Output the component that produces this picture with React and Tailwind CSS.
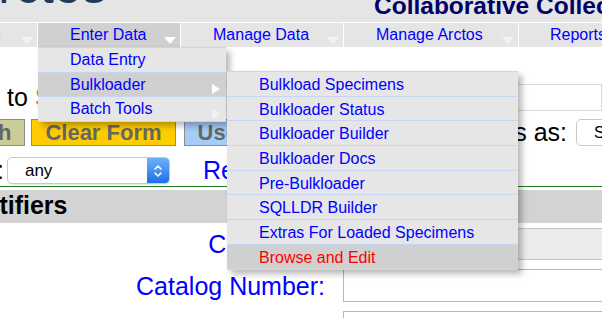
export default function App() {
  const sub = [
    "Bulkload Specimens",
    "Bulkloader Status",
    "Bulkloader Builder",
    "Bulkloader Docs",
    "Pre-Bulkloader",
    "SQLLDR Builder",
    "Extras For Loaded Specimens",
    "Browse and Edit",
  ];
  const DownArrow = ({ c }) => (
    <span className={`ml-auto mr-[4px] self-end mb-[3px] w-0 h-0 border-t-[7px] border-x-[6.5px] border-x-transparent ${c}`} />
  );
  return (
    <div className="relative w-[602px] h-[318px] overflow-hidden bg-white font-['Liberation_Sans',Arial,sans-serif]">
      {/* header */}
      <div className="h-[22px] bg-[#e5e5e5] flex overflow-hidden">
        <div className="w-[374px] shrink-0">
          <div className="ml-[-35px] mt-[-39px] text-[50px] leading-none text-[#1f3a54] whitespace-nowrap">Arctos</div>
        </div>
        <div className="shrink-0 mt-[-6px] text-[24.5px] leading-none font-bold text-[#000066] whitespace-nowrap">
          Collaborative Collection Management Solution
        </div>
      </div>

      {/* nav */}
      <div className="relative z-10 h-[25px] border-t border-white bg-[#e5e5e5] flex text-[16px] leading-[24px] text-[#0000ff]">
        <div className="w-[38px] shrink-0 border-r border-white flex overflow-hidden">
          <span className="ml-[-50px] whitespace-nowrap">Search</span>
          <DownArrow c="border-t-[#f3f3f3]" />
        </div>
        <div className="relative w-[143px] shrink-0 border-r border-white bg-[#d0d0d0] flex pl-[32px]">
          <span className="whitespace-nowrap">Enter Data</span>
          <DownArrow c="border-t-white" />
          {/* dropdown */}
          <div className="absolute left-0 top-full w-[188px] bg-[#e6e6e6] border-t border-[#c5d6f7] shadow-[4px_4px_6px_rgba(0,0,0,0.28)]">
            <div className="h-[24.5px] border-b border-[#c5d6f7] pl-[32px] flex items-center leading-[23.5px]">Data Entry</div>
            <div className="relative h-[24.5px] border-b border-[#c5d6f7] bg-[#d0d0d0] pl-[32px] flex leading-[23.5px]">
              <span>Bulkloader</span>
              <span className="ml-auto mr-[6px] self-end mb-[2px] w-0 h-0 border-l-[8px] border-l-white border-y-[5px] border-y-transparent" />
              {/* submenu */}
              <div className="absolute left-[189px] top-[-1.5px] w-[291px] bg-[#e6e6e6] border-t border-[#c5d6f7] shadow-[4px_4px_6px_rgba(0,0,0,0.28)]">
                {sub.map((s, i) => (
                  <div
                    key={s}
                    className={`h-[24.7px] border-b border-[#c5d6f7] pl-[32px] pt-[1px] leading-[23px] whitespace-nowrap ${
                      i === sub.length - 1 ? "bg-[#d0d0d0] text-[#ff0000]" : ""
                    }`}
                  >
                    {s}
                  </div>
                ))}
              </div>
            </div>
            <div className="h-[24.5px] border-b border-[#c5d6f7] pl-[32px] flex leading-[23.5px]">
              <span>Batch Tools</span>
              <span className="ml-auto mr-[6px] self-end mb-[2px] w-0 h-0 border-l-[8px] border-l-[#f2f2f2] border-y-[5px] border-y-transparent" />
            </div>
          </div>
        </div>
        <div className="w-[163px] shrink-0 border-r border-white flex pl-[32px]">
          <span className="whitespace-nowrap">Manage Data</span>
          <DownArrow c="border-t-[#f3f3f3]" />
        </div>
        <div className="w-[175px] shrink-0 border-r border-white flex pl-[32px]">
          <span className="whitespace-nowrap">Manage Arctos</span>
          <DownArrow c="border-t-[#f3f3f3]" />
        </div>
        <div className="w-[200px] shrink-0 flex pl-[31px]">
          <span className="whitespace-nowrap">Reports</span>
        </div>
      </div>

      {/* page content */}
      <div className="flex flex-col">
        {/* row A */}
        <div className="mt-[37px] h-[26px] flex items-center text-[25px] leading-[26px] whitespace-nowrap">
          <span className="ml-[7px] shrink-0 text-black">to</span>
          <span className="ml-[7px] shrink-0 text-[#d98a00]">Specimens</span>
          <div className="ml-[20px] flex-1 h-[27px] border border-[#d9d9d9] bg-white" />
        </div>

        {/* row B */}
        <div className="mt-[9px] h-[27px] flex items-stretch whitespace-nowrap">
          <div className="ml-[-76px] shrink-0 px-[13px] border border-[#8c8c8c] bg-[#cccc99] text-[22px] font-bold text-[#666] leading-[25px] flex items-center">
            Search
          </div>
          <div className="ml-[6px] shrink-0 px-[13px] border border-[#8c8c8c] bg-[#ffcc00] text-[22px] font-bold text-[#666] leading-[25px] flex items-center">
            Clear Form
          </div>
          <div className="ml-[8px] shrink-0 px-[13px] border border-[#8c8c8c] bg-[#a4cdf7] text-[22px] font-bold text-[#666] leading-[25px] flex items-center">
            Use Last Values
          </div>
          <div className="ml-auto shrink-0 flex items-center">
            <span className="text-[25px] leading-[27px] text-black">Results as:</span>
            <div className="ml-[9px] mr-[-94px] w-[120px] h-[27px] rounded-[5px] border border-[#c8c8c8] bg-white pl-[17px] text-[16px] leading-[25px] text-black">
              Specimen Detail
            </div>
          </div>
        </div>

        {/* row C */}
        <div className="mt-[11px] h-[27px] flex items-center whitespace-nowrap">
          <span className="ml-[-3px] text-[25px] leading-[27px] text-black">:</span>
          <div className="ml-[3px] w-[163px] h-[27px] rounded-[5px] border border-[#c8c8c8] bg-white flex items-stretch shadow-[0_1px_1px_rgba(0,0,0,0.08)]">
            <span className="pl-[17px] text-[17px] leading-[25px] text-black">any</span>
            <div className="ml-auto w-[22px] rounded-r-[4px] bg-gradient-to-b from-[#6cb0fb] to-[#1d6fe6] flex items-center justify-center">
              <svg width="10" height="16" viewBox="0 0 10 16" fill="none" stroke="white" strokeWidth="1.6" strokeLinecap="round" strokeLinejoin="round">
                <path d="M2 6 L5 3 L8 6" />
                <path d="M2 10 L5 13 L8 10" />
              </svg>
            </div>
          </div>
          <span className="ml-[33px] text-[25px] leading-[27px] text-[#0000ff]">Reset</span>
        </div>

        {/* green rule */}
        <div className="mt-[2px] h-[1px] bg-[#1f7f1f]" />

        {/* section header */}
        <div className="mt-[3px] h-[33px] bg-[#d3d3d3] flex items-center pb-[2px] whitespace-nowrap">
          <span className="ml-[-52px] text-[25px] leading-[27px] font-bold text-black">Identifiers</span>
        </div>

        {/* row D */}
        <div className="mt-[5px] h-[32px] flex items-center whitespace-nowrap">
          <span className="w-[325px] shrink-0 text-right text-[25px] leading-[28px] text-[#0000ff]">Collection:</span>
          <div className="ml-[18px] w-[300px] shrink-0 h-[32px] border border-[#c6c6c6] bg-[#ececec]" />
        </div>

        {/* row E */}
        <div className="mt-[9px] h-[33px] flex items-center whitespace-nowrap">
          <span className="w-[325px] shrink-0 text-right text-[25px] leading-[28px] text-[#0000ff]">Catalog Number:</span>
          <div className="ml-[18px] w-[300px] shrink-0 h-[33px] border border-[#b8b8b8] bg-white" />
        </div>

        {/* row F */}
        <div className="mt-[9px] h-[33px] flex items-center whitespace-nowrap">
          <span className="w-[325px] shrink-0" />
          <div className="ml-[18px] w-[300px] shrink-0 h-[33px] border border-[#b8b8b8] bg-white" />
        </div>
      </div>
    </div>
  );
}
